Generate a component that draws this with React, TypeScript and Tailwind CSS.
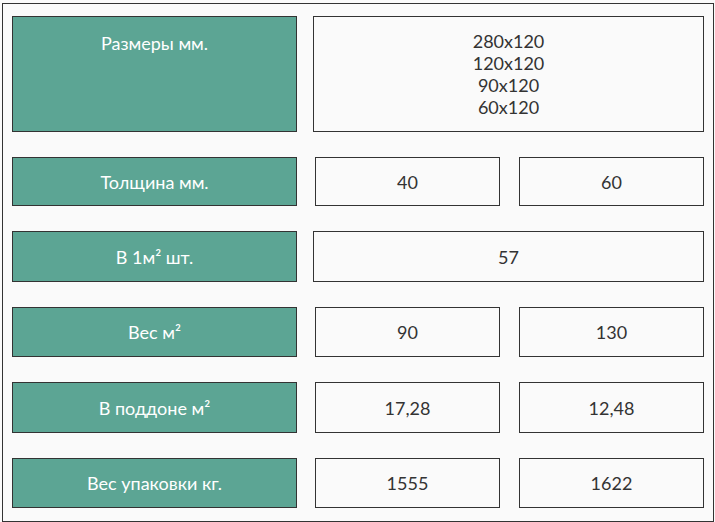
import React from "react";

const font = { fontFamily: "Lato, 'Noto Sans', sans-serif" };

function Label({ text, top = false, h }: { text: React.ReactNode; top?: boolean; h: string }) {
  return (
    <div
      className={`w-[285px] shrink-0 bg-[#5ca594] border border-[#333333] text-white text-[18px] leading-[22px] flex justify-center ${top ? "items-start pt-[15px]" : "items-center"} ${h}`}
    >
      {text}
    </div>
  );
}

function Val({ children, w }: { children: React.ReactNode; w: string }) {
  return (
    <div className={`${w} h-full border border-[#333333] bg-[#fafafa] text-[#333333] text-[18px] leading-[22px] flex flex-col items-center justify-center`}>
      {children}
    </div>
  );
}

function Row({ label, values, h, top = false }: { label: React.ReactNode; values: React.ReactNode[]; h: string; top?: boolean }) {
  return (
    <div className={`flex ${h}`}>
      <Label text={label} h="h-full" top={top} />
      {values.length === 1 ? (
        <div className="ml-[16px] w-[391px] h-full">
          <Val w="w-full">{values[0]}</Val>
        </div>
      ) : (
        <div className="ml-[18px] w-[389px] h-full flex gap-[19px]">
          <Val w="w-[185px]">{values[0]}</Val>
          <Val w="w-[185px]">{values[1]}</Val>
        </div>
      )}
    </div>
  );
}

export default function App() {
  return (
    <div className="w-[715px] h-[522px] bg-[#fafafa] pt-[3px] pl-[2px]" style={font}>
      <div className="w-[712px] h-[519px] border border-[#333333] pt-[12px] pl-[9px] flex flex-col gap-[25px]">
        <Row
          h="h-[116px]"
          top
          label="Размеры мм."
          values={[
            <>
              <div>280x120</div>
              <div>120x120</div>
              <div>90x120</div>
              <div>60x120</div>
            </>,
          ]}
        />
        <Row h="h-[49px]" label="Толщина мм." values={["40", "60"]} />
        <Row h="h-[51px]" label={<>В 1м² шт.</>} values={["57"]} />
        <Row h="h-[50px]" label="Вес м²" values={["90", "130"]} />
        <Row h="h-[51px]" label="В поддоне м²" values={["17,28", "12,48"]} />
        <Row h="h-[50px]" label="Вес упаковки кг." values={["1555", "1622"]} />
      </div>
    </div>
  );
}
